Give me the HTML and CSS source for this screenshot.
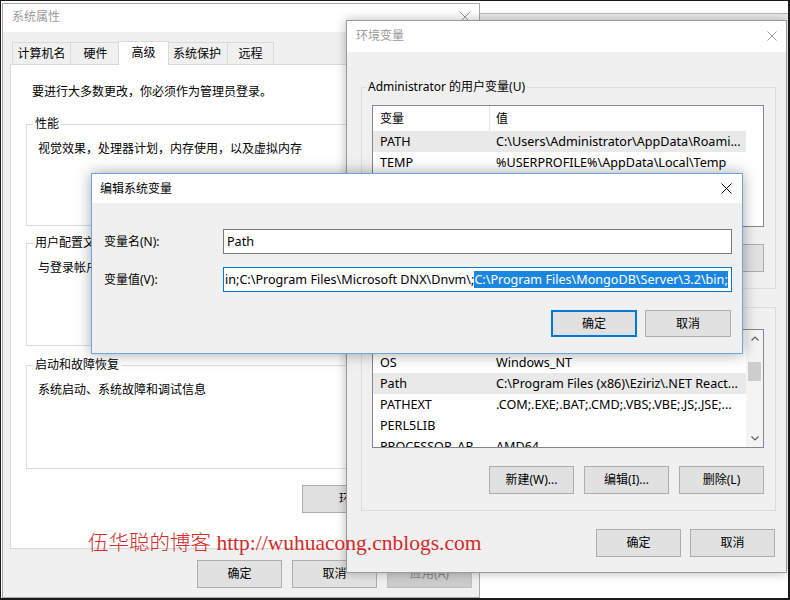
FILE: index.html
```html
<!DOCTYPE html>
<html lang="zh-CN">
<head>
<meta charset="utf-8">
<title>编辑系统变量</title>
<link rel="stylesheet" href="styles.css">
</head>
<body>
<div class="screen">
  <div class="backwin"></div>

  <!-- 系统属性 -->
  <div class="win sys">
    <div class="titlebar">
      <span class="title">系统属性</span>
      <svg class="x" viewBox="0 0 12 12" width="12" height="12"><path d="M0.5 0.5L11.5 11.5M11.5 0.5L0.5 11.5"/></svg>
    </div>
    <div class="body">
      <div class="tabs">
        <div class="tab t1">计算机名</div>
        <div class="tab t2">硬件</div>
        <div class="tab sel">高级</div>
        <div class="tab t4">系统保护</div>
        <div class="tab t5">远程</div>
      </div>
      <div class="panel">
        <p class="note">要进行大多数更改，你必须作为管理员登录。</p>
        <fieldset class="group g1"><legend>性能</legend><p>视觉效果，处理器计划，内存使用，以及虚拟内存</p></fieldset>
        <fieldset class="group g2"><legend>用户配置文件</legend><p>与登录帐户相关的桌面设置</p></fieldset>
        <fieldset class="group g3"><legend>启动和故障恢复</legend><p>系统启动、系统故障和调试信息</p></fieldset>
        <div class="envrow"><button class="btn envbtn">环境变量(N)...</button></div>
      </div>
      <div class="footer">
        <button class="btn">确定</button>
        <button class="btn">取消</button>
        <button class="btn disabled">应用(A)</button>
      </div>
    </div>
  </div>

  <!-- 环境变量 -->
  <div class="win env">
    <div class="titlebar">
      <span class="title">环境变量</span>
      <svg class="x" viewBox="0 0 10 10" width="10" height="10"><path d="M0.5 0.5L9.5 9.5M9.5 0.5L0.5 9.5"/></svg>
    </div>
    <div class="body">
      <fieldset class="egroup ugroup">
        <legend>Administrator 的用户变量(U)</legend>
        <div class="list ulist">
          <div class="rows">
            <div class="lhead"><span>变量</span><span>值</span></div>
            <div class="lrow sel"><span>PATH</span><span>C:\Users\Administrator\AppData\Roami...</span></div>
            <div class="lrow"><span>TEMP</span><span>%USERPROFILE%\AppData\Local\Temp</span></div>
            <div class="lrow"><span>TMP</span><span>%USERPROFILE%\AppData\Local\Temp</span></div>
          </div>
          <div class="vspace"></div>
        </div>
        <div class="btnrow">
          <button class="btn">新建(N)...</button>
          <button class="btn">编辑(E)...</button>
          <button class="btn">删除(D)</button>
        </div>
      </fieldset>
      <fieldset class="egroup sgroup">
        <legend>系统变量(S)</legend>
        <div class="list slist">
          <div class="rows">
            <div class="lhead short"><span>变量</span><span>值</span></div>
            <div class="lrow"><span>OS</span><span>Windows_NT</span></div>
            <div class="lrow sel"><span>Path</span><span>C:\Program Files (x86)\Eziriz\.NET React...</span></div>
            <div class="lrow"><span>PATHEXT</span><span>.COM;.EXE;.BAT;.CMD;.VBS;.VBE;.JS;.JSE;...</span></div>
            <div class="lrow"><span>PERL5LIB</span><span></span></div>
            <div class="lrow"><span>PROCESSOR_AR...</span><span>AMD64</span></div>
          </div>
          <div class="vscroll">
            <div class="arrow"><svg viewBox="0 0 8 5" width="8" height="5"><path d="M0.5 4.5L4 1L7.5 4.5"/></svg></div>
            <div class="track"><div class="thumb"></div></div>
            <div class="arrow"><svg viewBox="0 0 8 5" width="8" height="5"><path d="M0.5 0.5L4 4L7.5 0.5"/></svg></div>
          </div>
        </div>
        <div class="btnrow">
          <button class="btn">新建(W)...</button>
          <button class="btn">编辑(I)...</button>
          <button class="btn">删除(L)</button>
        </div>
      </fieldset>
      <div class="footer">
        <button class="btn">确定</button>
        <button class="btn">取消</button>
      </div>
    </div>
  </div>

  <!-- 编辑系统变量 -->
  <div class="win edit">
    <div class="titlebar">
      <span class="title">编辑系统变量</span>
      <svg class="x" viewBox="0 0 11 11" width="11" height="11"><path d="M0.5 0.5L10.5 10.5M10.5 0.5L0.5 10.5"/></svg>
    </div>
    <div class="body">
      <div class="form">
        <label>变量名(N):</label>
        <div class="input">Path</div>
        <label>变量值(V):</label>
        <div class="input focus">in;C:\Program Files\Microsoft DNX\Dnvm\;<span class="selected">C:\Program Files\MongoDB\Server\3.2\bin;</span></div>
      </div>
      <div class="actions">
        <button class="btn default">确定</button>
        <button class="btn">取消</button>
      </div>
    </div>
  </div>

  <div class="watermark"><span class="cn">伍华聪的博客</span> http://wuhuacong.cnblogs.com</div>
</div>
</body>
</html>
```

FILE: styles.css
```css
* { box-sizing: border-box; }
html, body { margin: 0; padding: 0; }
body {
  width: 790px;
  height: 600px;
  overflow: hidden;
  font-family: "Noto Sans", "Noto Sans CJK SC", sans-serif;
  font-size: 12px;
  line-height: 16px;
  color: #000;
}
p { margin: 0; }

.screen {
  position: relative;
  width: 790px;
  height: 600px;
  background: #fff;
  overflow: hidden;
  box-shadow: inset 1px 1px 0 #1a1a1a, inset -2px -2px 0 #1a1a1a;
}

.backwin {
  position: absolute;
  left: 480px;
  top: 13px;
  width: 308px;
  height: 10px;
  border-top: 1px solid #b9b9b9;
  background: #ebebeb;
}

/* generic window */
.win {
  position: absolute;
  display: flex;
  flex-direction: column;
  background: #f0f0f0;
}
.titlebar {
  flex: none;
  display: flex;
  align-items: center;
  justify-content: space-between;
  background: #fff;
}
.title { color: #9b9b9b; white-space: nowrap; }
.x { fill: none; stroke: #9b9b9b; stroke-width: 1; display: block; }
.body { flex: 1; }

.btn {
  display: flex;
  align-items: center;
  justify-content: center;
  width: 85px;
  height: 28px;
  padding: 0;
  margin: 0;
  border: 1px solid #adadad;
  background: #e1e1e1;
  font: inherit;
  line-height: 16px;
  color: #000;
  white-space: nowrap;
}
.btn.disabled { background: #cccccc; border-color: #bfbfbf; color: #838383; }
.btn.default { border: 2px solid #0078d7; }

/* ---------- 系统属性 ---------- */
.sys {
  z-index: 1;
  left: 2px;
  top: 3px;
  width: 478px;
  height: 595px;
  border: 1px solid #a9a9a9;
}
.sys .titlebar { height: 28px; padding: 0 8px 2px 9px; }
.sys .body { padding: 0 7px; }

.tabs {
  position: relative;
  z-index: 2;
  display: flex;
  align-items: flex-end;
  height: 25px;
  margin: 8px 0 -1px 2px;
}
.tab {
  height: 23px;
  display: flex;
  align-items: center;
  justify-content: center;
  padding-top: 1px;
  border: 1px solid #d9d9d9;
  background: #f0f0f0;
  margin-right: -1px;
  white-space: nowrap;
}
.t1 { width: 59px; }
.t2 { width: 51px; }
.t4 { width: 62px; }
.t5 { width: 47px; }
.tab.sel {
  position: relative;
  z-index: 3;
  width: 51px;
  height: 24px;
  padding-top: 0;
  padding-bottom: 2px;
  margin-left: -2px;
  margin-right: -3px;
  background: #fff;
  border-bottom: none;
}

.panel {
  position: relative;
  z-index: 1;
  height: 485px;
  background: #fff;
  border: 1px solid #d9d9d9;
}
.note { margin: 19px 0 0 21px; }

.group {
  width: 440px;
  margin: 0 0 0 15px;
  padding: 0 6px;
  border: 1px solid #dcdcdc;
  min-width: 0;
}
.group legend,
.egroup legend { padding: 0 2px; line-height: 16px; }
.group p { margin: 9px 0 0 5px; white-space: nowrap; }
.g1 { margin-top: 16px; height: 110px; }
.g2 { margin-top: 9px; height: 111px; }
.g3 { margin-top: 11px; height: 112px; }

.envrow { margin: 16px 0 0 291px; }
.envbtn { width: 148px; }

.sys .footer {
  display: flex;
  justify-content: flex-end;
  gap: 10px;
  margin-top: 11px;
}

/* ---------- 环境变量 ---------- */
.env {
  z-index: 2;
  left: 346px;
  top: 20px;
  width: 441px;
  height: 553px;
  border: 1px solid #9a9a9a;
  box-shadow: 0 0 10px rgba(0, 0, 0, 0.28);
}
.env .titlebar { height: 31px; padding: 0 9px 1px 9px; }
.env .body { padding: 0 10px 0 14px; }

.egroup {
  width: 415px;
  margin: 0;
  padding: 0 11px 16px 4px;
  border: 1px solid #dcdcdc;
  min-width: 0;
}
.ugroup { margin-top: 27px; }
.sgroup { margin-top: 10px; }

.list {
  display: flex;
  width: 392px;
  margin-left: 6px;
  border: 1px solid #828790;
  background: #fff;
  overflow: hidden;
}
.ulist { margin-top: 10px; height: 122px; }
.slist { margin-top: 14px; height: 119px; }
.rows { flex: 1; min-width: 0; overflow: hidden; }
.vspace { width: 17px; flex: none; }

.lhead, .lrow {
  display: grid;
  grid-template-columns: 117px 1fr;
  align-items: center;
  white-space: nowrap;
  overflow: hidden;
}
.lhead { height: 25px; }
.lhead.short { height: 22px; }
.lhead span:first-child { border-right: 1px solid #e5e5e5; align-self: stretch; display: flex; align-items: center; }
.lhead span, .lrow span { padding-left: 6px; overflow: hidden; }
.lhead span:first-child, .lrow span:first-child { padding-left: 7px; }
.lrow { height: 21px; font-size: 12.6px; }
.lrow.sel { background: #e9e9e9; }

.vscroll {
  width: 17px;
  flex: none;
  display: flex;
  flex-direction: column;
  background: #f4f4f4;
}
.arrow {
  height: 17px;
  display: flex;
  align-items: center;
  justify-content: center;
  flex: none;
}
.arrow svg { fill: none; stroke: #606060; stroke-width: 1.2; display: block; }
.track { flex: 1; }
.thumb { margin: 15px 2px 0 2px; height: 19px; background: #cdcdcd; }

.btnrow {
  display: flex;
  justify-content: flex-end;
  gap: 10px;
  margin-top: 17px;
}
.sgroup .btnrow { margin-top: 18px; }

.env .footer {
  display: flex;
  justify-content: flex-end;
  gap: 9px;
  margin-top: 18px;
  padding-right: 1px;
}

/* ---------- 编辑系统变量 ---------- */
.edit {
  z-index: 3;
  left: 91px;
  top: 173px;
  width: 652px;
  height: 181px;
  border: 1px solid #6aa7df;
  box-shadow: 0 0 14px rgba(0, 0, 0, 0.35);
}
.edit .titlebar { height: 29px; padding: 0 10px 0 8px; }
.edit .title { color: #000; }
.edit .x { stroke: #000; }
.edit .body { padding: 26px 11px 0 12px; }

.form {
  display: grid;
  grid-template-columns: 119px 509px;
  row-gap: 13px;
  align-items: center;
}
.input {
  height: 25px;
  line-height: 23px;
  padding-left: 3px;
  border: 1px solid #7a7a7a;
  background: #fff;
  white-space: nowrap;
  overflow: hidden;
  font-size: 12.6px;
}
.input.focus { border-color: #0078d7; padding-left: 1px; }
.selected { background: #1a86e0; color: #fff; }

.actions {
  display: flex;
  justify-content: flex-end;
  gap: 8px;
  margin-top: 18px;
}
.actions .btn { width: 86px; height: 27px; }

/* watermark */
.watermark {
  position: absolute;
  z-index: 4;
  left: 88px;
  top: 528px;
  font-family: "Liberation Serif", "Noto Sans CJK SC", serif;
  font-size: 21.5px;
  line-height: 26px;
  color: #d42a2a;
  white-space: nowrap;
}
.watermark .cn { font-family: "Noto Sans CJK SC", serif; font-size: 20.5px; font-weight: 300; }
```
